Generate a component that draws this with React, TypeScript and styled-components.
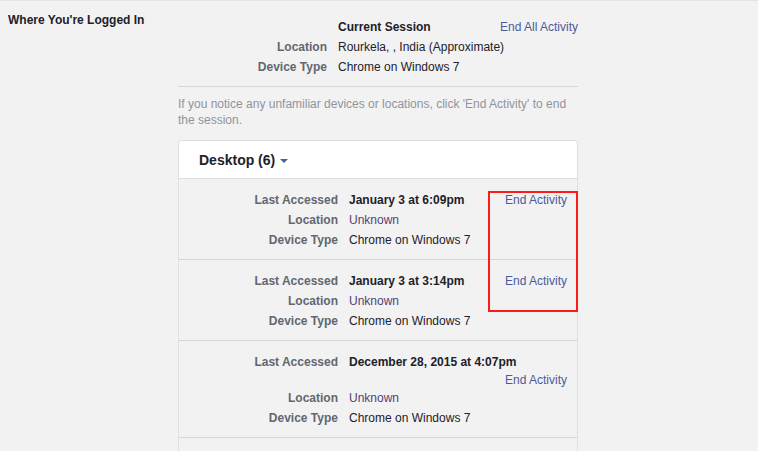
import React from "react";
import styled, { createGlobalStyle } from "styled-components";

const Global = createGlobalStyle`
  html, body { margin: 0; padding: 0; overflow: hidden; background: #f2f2f2; }
  body { font-family: Arial, "Liberation Sans", Helvetica, sans-serif; font-size: 12px; color: #1d2129; }
`;

const Page = styled.div`
  border-top: 1px solid #e3e4e8;
  display: grid;
  grid-template-columns: 178px 400px;
  min-height: 460px;
`;

const Title = styled.h3`
  margin: 0;
  padding: 11px 0 0 8px;
  font-size: 12px;
  line-height: 16px;
  font-weight: bold;
  color: #1d2129;
`;

const Main = styled.div`
  padding-top: 16px;
`;

const SessionGrid = styled.div`
  display: grid;
  grid-template-columns: 149px minmax(0, 1fr) auto;
  column-gap: 11px;
  line-height: 20px;
  padding-bottom: 9px;
  border-bottom: 1px solid #d3d6db;
`;

const Label = styled.div`
  text-align: right;
  font-weight: bold;
  color: #616770;
  white-space: nowrap;
`;

const Value = styled.div<{ $bold?: boolean; $muted?: boolean }>`
  font-weight: ${(p) => (p.$bold ? "bold" : "normal")};
  color: ${(p) => (p.$muted ? "#553f76" : "#1d2129")};
  white-space: nowrap;
`;

const Link = styled.a`
  color: #4b5b9a;
  text-decoration: none;
  white-space: nowrap;
  cursor: pointer;
`;

const Note = styled.p`
  margin: 9px 0 12px;
  line-height: 16px;
  color: #90949c;
`;

const Card = styled.div`
  position: relative;
  min-height: 340px;
  border: 1px solid #dddfe2;
  border-radius: 3px 3px 0 0;
`;

const CardHeader = styled.div`
  background: #fff;
  height: 37px;
  padding-left: 20px;
  display: flex;
  align-items: center;
  border-bottom: 1px solid #dddfe2;
  border-radius: 3px 3px 0 0;
`;

const HeaderTitle = styled.span`
  font-size: 14px;
  font-weight: bold;
  color: #1d2129;
`;

const Caret = styled.span`
  display: inline-block;
  margin-left: 5px;
  margin-top: 3px;
  width: 0;
  height: 0;
  border-left: 4.5px solid transparent;
  border-right: 4.5px solid transparent;
  border-top: 4.5px solid #4b5f95;
`;

const Row = styled.div`
  padding: 11px 10px 9px 0;
  border-bottom: 1px solid #d3d6db;
`;

const FirstLine = styled.div`
  display: flex;
  flex-wrap: wrap;
  align-items: center;
  line-height: 20px;
`;

const Line = styled.div`
  display: flex;
  line-height: 20px;
`;

const RowLabel = styled(Label)`
  width: 159px;
  flex: none;
`;

const RowValue = styled(Value)`
  margin-left: 11px;
`;

const RowLink = styled(Link)`
  margin-left: auto;
  line-height: 16px;
  padding-left: 8px;
`;

const Highlight = styled.div`
  position: absolute;
  left: 309px;
  top: 50px;
  width: 90px;
  height: 121px;
  box-sizing: border-box;
  border: 2px solid #ff1a1a;
  pointer-events: none;
`;

type Session = { accessed: string; location: string; device: string };

const sessions: Session[] = [
  { accessed: "January 3 at 6:09pm", location: "Unknown", device: "Chrome on Windows 7" },
  { accessed: "January 3 at 3:14pm", location: "Unknown", device: "Chrome on Windows 7" },
  { accessed: "December 28, 2015 at 4:07pm", location: "Unknown", device: "Chrome on Windows 7" },
];

export default function App() {
  return (
    <>
      <Global />
      <Page>
        <Title>Where You're Logged In</Title>
        <Main>
          <SessionGrid>
            <div />
            <Value $bold>Current Session</Value>
            <Link>End All Activity</Link>
            <Label>Location</Label>
            <Value>Rourkela, , India (Approximate)</Value>
            <div />
            <Label>Device Type</Label>
            <Value>Chrome on Windows 7</Value>
            <div />
          </SessionGrid>
          <Note>
            If you notice any unfamiliar devices or locations, click 'End Activity' to end the session.
          </Note>
          <Card>
            <CardHeader>
              <HeaderTitle>Desktop (6)</HeaderTitle>
              <Caret />
            </CardHeader>
            {sessions.map((s, i) => (
              <Row key={i}>
                <FirstLine>
                  <RowLabel>Last Accessed</RowLabel>
                  <RowValue $bold>{s.accessed}</RowValue>
                  <RowLink>End Activity</RowLink>
                </FirstLine>
                <Line>
                  <RowLabel>Location</RowLabel>
                  <RowValue $muted>{s.location}</RowValue>
                </Line>
                <Line>
                  <RowLabel>Device Type</RowLabel>
                  <RowValue>{s.device}</RowValue>
                </Line>
              </Row>
            ))}
            <Highlight />
          </Card>
        </Main>
      </Page>
    </>
  );
}
